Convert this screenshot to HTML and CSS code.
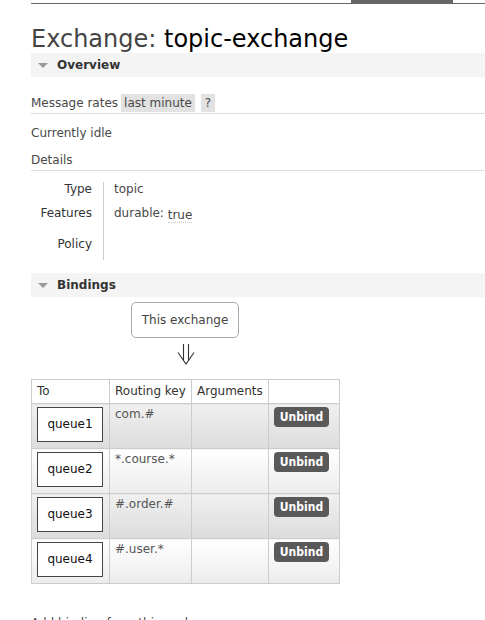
FILE: index.html
```html
<!DOCTYPE html>
<html>
<head>
<meta charset="utf-8">
<link rel="stylesheet" href="styles.css">
</head>
<body>
<div class="topline"><span class="tab"></span></div>
<div class="main">
  <h1>Exchange: <b>topic-exchange</b></h1>

  <div class="section-h"><span class="tri"></span>Overview</div>
  <div class="section-body">
    <div class="rates"><span>Message rates</span><span class="pill">last minute</span><span class="pill q">?</span></div>
    <div class="idle">Currently idle</div>
    <div class="details-h">Details</div>
    <div class="facts">
      <div class="lbl r1">Type</div><div class="val r1">topic</div>
      <div class="lbl r2">Features</div><div class="val r2">durable: <span class="true">true</span></div>
      <div class="lbl r3">Policy</div><div class="val r3"></div>
    </div>
  </div>

  <div class="section-h bind"><span class="tri"></span>Bindings</div>
  <div class="bindings">
    <div class="this-ex">This exchange</div>
    <svg class="arrow" width="18" height="21" viewBox="0 0 18 21">
      <path d="M6.5 0 V17 M11.5 0 V17 M1 8.5 L9 20 L17 8.5" fill="none" stroke="#333" stroke-width="1.1"/>
    </svg>
    <table class="btable">
      <colgroup><col class="c1"><col class="c2"><col class="c3"><col class="c4"></colgroup>
      <thead>
        <tr><th>To</th><th>Routing key</th><th>Arguments</th><th></th></tr>
      </thead>
      <tbody>
        <tr class="alt1"><td><div class="queue">queue1</div></td><td>com.#</td><td></td><td><span class="btn">Unbind</span></td></tr>
        <tr class="alt2"><td><div class="queue">queue2</div></td><td>*.course.*</td><td></td><td><span class="btn">Unbind</span></td></tr>
        <tr class="alt1"><td><div class="queue">queue3</div></td><td>#.order.#</td><td></td><td><span class="btn">Unbind</span></td></tr>
        <tr class="alt2"><td><div class="queue">queue4</div></td><td>#.user.*</td><td></td><td><span class="btn">Unbind</span></td></tr>
      </tbody>
    </table>
    <div class="add">Add binding from this exchange</div>
  </div>
</div>
</body>
</html>
```
FILE: styles.css
```css
html, body {
  margin: 0;
  padding: 0;
  background: #fff;
}
body {
  font-family: "DejaVu Sans", Verdana, sans-serif;
  font-size: 12px;
  color: #484848;
  overflow: hidden;
}
.topline {
  margin-left: 31px;
  height: 3px;
  border-bottom: 1px solid #666;
  display: flex;
}
.tab {
  display: block;
  margin-left: 320px;
  width: 102px;
  height: 3px;
  background: #666;
}
.main {
  padding-left: 31px;
}
h1 {
  margin: 21px 0 0;
  font-size: 24px;
  line-height: 28px;
  font-weight: normal;
  color: #444;
  white-space: nowrap;
}
h1 b {
  font-weight: normal;
  color: #000;
}
.section-h {
  height: 24px;
  background: #f4f4f4;
  font-weight: bold;
  color: #333;
  display: flex;
  align-items: center;
}
.tri {
  width: 0;
  height: 0;
  border-left: 5px solid transparent;
  border-right: 5px solid transparent;
  border-top: 5px solid #999;
  margin: 0 9px 0 7px;
}
.section-body {
  padding-top: 17px;
}
.rates {
  display: flex;
  align-items: center;
  gap: 3px;
  height: 18px;
  padding-bottom: 1px;
  border-bottom: 1px solid #ddd;
}
.pill {
  background: #e2e2e2;
  padding: 2px 3px;
  line-height: 14px;
}
.pill.q {
  margin-left: 3px;
  padding: 2px 4px;
}
.idle {
  margin-top: 12px;
  line-height: 15px;
}
.details-h {
  margin-top: 12px;
  line-height: 15px;
  padding-bottom: 2px;
  border-bottom: 1px solid #ddd;
}
.facts {
  margin-top: 11px;
  display: grid;
  grid-template-columns: 72px 1fr;
  grid-template-rows: 16px 31px 31px;
  line-height: 15px;
}
.lbl {
  text-align: right;
  color: #333;
  padding-right: 11px;
}
.val {
  border-left: 1px solid #ccc;
  padding-left: 10px;
}
.r1 { padding-top: 0; }
.r2 { padding-top: 8px; }
.lbl.r3 { padding-top: 8px; }
.true {
  display: inline-block;
  position: relative;
  top: 2px;
  border-bottom: 1px dotted #ccc;
  line-height: 13px;
}
.section-h.bind {
  margin-top: 13px;
}
.bindings {
  padding-top: 5px;
}
.this-ex {
  margin-left: 100px;
  width: 106px;
  height: 34px;
  line-height: 34px;
  text-align: center;
  border: 1px solid #aaa;
  border-radius: 5px;
  color: #444;
}
.arrow {
  display: block;
  margin: 6px 0 0 146px;
}
.btable {
  margin-top: 14px;
  border-collapse: collapse;
  border: 1px solid #ccc;
  table-layout: fixed;
  width: 308px;
}
.c1 { width: 78px; }
.c2 { width: 82px; }
.c3 { width: 77px; }
.c4 { width: 71px; }
.btable th, .btable td {
  border: 1px solid #ccc;
  text-align: left;
  vertical-align: top;
  white-space: nowrap;
}
.btable th {
  font-weight: normal;
  color: #333;
  height: 24px;
  line-height: 22px;
  padding: 0 5px;
  background: #fff;
  box-sizing: border-box;
}
.btable td {
  height: 45px;
  box-sizing: border-box;
  padding: 3px 5px 0;
}
.btable td:nth-child(2) {
  padding-top: 2px;
  color: #555;
  line-height: 16px;
}
tr.alt1 td {
  background: linear-gradient(#f0f0f0, #dcdcdc);
}
tr.alt2 td {
  background: linear-gradient(#ffffff, #ececec);
}
.queue {
  width: 64px;
  height: 33px;
  line-height: 33px;
  border: 1px solid #444;
  background: #fff;
  text-align: center;
  color: #111;
}
.btn {
  display: inline-block;
  width: 55px;
  height: 20px;
  line-height: 20px;
  text-align: center;
  background: #595959;
  color: #fff;
  border-radius: 4px;
  font-family: "DejaVu Sans Condensed", "DejaVu Sans", sans-serif;
  font-weight: bold;
}
.add {
  margin-top: 32px;
  line-height: 15px;
}
```
